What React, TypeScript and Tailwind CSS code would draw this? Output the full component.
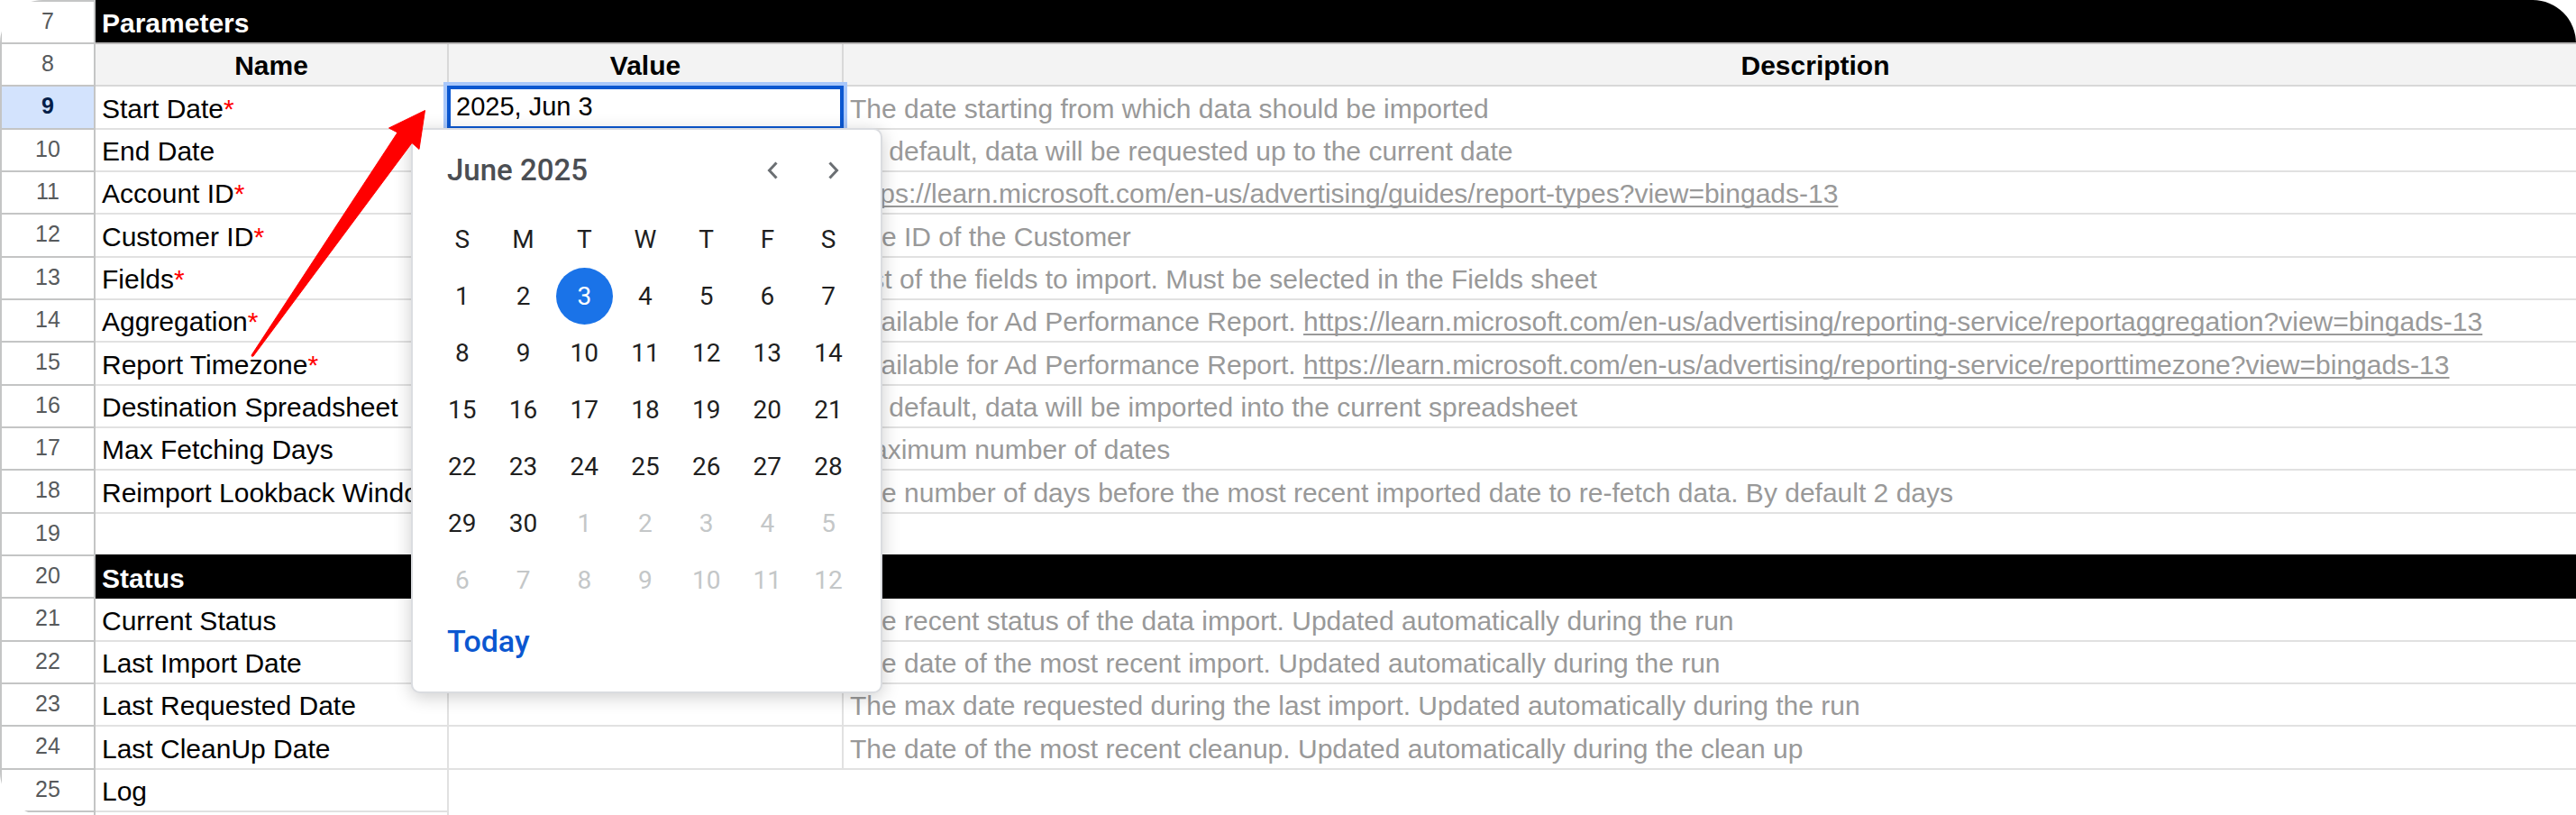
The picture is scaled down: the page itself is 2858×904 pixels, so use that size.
import React, { useState } from "react";

type Row = {
  n: number;
  kind?: "section" | "head";
  name?: string;
  required?: boolean;
  text?: string;
  link?: string;
};

const REF = "https://learn.microsoft.com/en-us/advertising/";

const ROWS: Row[] = [
  { n: 7, kind: "section", name: "Parameters" },
  { n: 8, kind: "head" },
  { n: 9, name: "Start Date", required: true, text: "The date starting from which data should be imported" },
  { n: 10, name: "End Date", text: "By default, data will be requested up to the current date" },
  { n: 11, name: "Account ID", required: true, link: REF + "guides/report-types?view=bingads-13" },
  { n: 12, name: "Customer ID", required: true, text: "The ID of the Customer" },
  { n: 13, name: "Fields", required: true, text: "List of the fields to import. Must be selected in the Fields sheet" },
  {
    n: 14,
    name: "Aggregation",
    required: true,
    text: "Available for Ad Performance Report. ",
    link: REF + "reporting-service/reportaggregation?view=bingads-13",
  },
  {
    n: 15,
    name: "Report Timezone",
    required: true,
    text: "Available for Ad Performance Report. ",
    link: REF + "reporting-service/reporttimezone?view=bingads-13",
  },
  { n: 16, name: "Destination Spreadsheet", text: "By default, data will be imported into the current spreadsheet" },
  { n: 17, name: "Max Fetching Days", text: "Maximum number of dates" },
  {
    n: 18,
    name: "Reimport Lookback Window",
    text: "The number of days before the most recent imported date to re-fetch data. By default 2 days",
  },
  { n: 19 },
  { n: 20, kind: "section", name: "Status" },
  { n: 21, name: "Current Status", text: "The recent status of the data import. Updated automatically during the run" },
  { n: 22, name: "Last Import Date", text: "The date of the most recent import. Updated automatically during the run" },
  {
    n: 23,
    name: "Last Requested Date",
    text: "The max date requested during the last import. Updated automatically during the run",
  },
  { n: 24, name: "Last CleanUp Date", text: "The date of the most recent cleanup. Updated automatically during the clean up" },
];

const WEEKDAYS = ["S", "M", "T", "W", "T", "F", "S"];
const WEEKS = [0, 1, 2, 3, 4, 5].map((w) => [1, 2, 3, 4, 5, 6, 7].map((d) => w * 7 + d));

const CELL = "border-r-2 border-b-2 border-[#e1e1e1] p-0 whitespace-nowrap";

function RowNumber({ n, active, first }: { n: number; active?: boolean; first?: boolean }) {
  return (
    <th
      scope="row"
      className={
        "border-x-2 border-b-2 border-[#c4c5c5] p-0 pb-1 text-center text-[25px] leading-[30px] " +
        (first ? "border-t-2 " : "") +
        (active ? "bg-[#d3e3fd] font-bold text-[#041e49]" : "bg-white font-normal text-[#575a5c]")
      }
    >
      {n}
    </th>
  );
}

function Calendar({ day, onPick }: { day: number; onPick: (d: number) => void }) {
  return (
    <div
      role="dialog"
      aria-label="Choose a date"
      className="absolute top-[46px] -left-[42px] z-20 w-[523px] rounded-[10px] border-2 border-[#dadce0] bg-white pr-6 pb-5 pl-[21px] font-[Roboto,sans-serif] shadow-[0_4px_20px_rgba(0,0,0,0.2)]"
    >
      <div className="flex h-[90px] items-center pl-[17px]">
        <span className="flex-1 text-[33px] leading-10 font-medium text-[#4b4e53]">June 2025</span>
        <div className="flex gap-3">
          <button type="button" aria-label="Previous month" className="flex h-14 w-14 items-center justify-center">
            <svg width="12" height="20" viewBox="0 0 12 20" fill="none" stroke="#6b6f73" strokeWidth="3">
              <path d="M10.5 1.5 2.5 10l8 8.500" />
            </svg>
          </button>
          <button type="button" aria-label="Next month" className="flex h-14 w-14 items-center justify-center">
            <svg width="12" height="20" viewBox="0 0 12 20" fill="none" stroke="#6b6f73" strokeWidth="3">
              <path d="M1.500 1.500 9.500 10l-8 8.500" />
            </svg>
          </button>
        </div>
      </div>
      <table className="w-full table-fixed border-separate border-spacing-0 text-[28px] leading-8 text-[#1f1f1f]">
        <thead>
          <tr className="h-[63px]">
            {WEEKDAYS.map((d, i) => (
              <th key={i} scope="col" className="p-0 text-center font-normal">
                {d}
              </th>
            ))}
          </tr>
        </thead>
        <tbody>
          {WEEKS.map((week) => (
            <tr key={week[0]} className="h-[63px]">
              {week.map((d) => (
                <td key={d} className="p-0 text-center">
                  <button
                    type="button"
                    onClick={() => d <= 30 && onPick(d)}
                    className={
                      "mx-auto flex h-[63px] w-[63px] items-center justify-center rounded-full " +
                      (d === day ? "bg-[#1a73e8] text-white" : d > 30 ? "text-[#c4c7c8]" : "")
                    }
                  >
                    {d > 30 ? d - 30 : d}
                  </button>
                </td>
              ))}
            </tr>
          ))}
        </tbody>
      </table>
      <div className="flex h-[72px] items-center pl-[17px]">
        <button type="button" className="text-[34px] leading-10 font-medium text-[#0b57d0]">
          Today
        </button>
      </div>
    </div>
  );
}

function DateCell() {
  const [day, setDay] = useState(3);
  return (
    <td className={CELL + " relative"}>
      <input
        type="text"
        aria-label="Start Date"
        value={"2025, Jun " + day}
        readOnly
        className="absolute -top-px -left-0.5 z-10 h-[49px] w-[440px] border-4 border-[#0b57d0] bg-white pb-0.5 pl-1.5 text-[29px] leading-9 text-black shadow-[0_0_0_4px_#a8c7fa] outline-none"
      />
      <Calendar day={day} onPick={setDay} />
    </td>
  );
}

function SheetRow({ row }: { row: Row }) {
  if (row.kind === "section") {
    return (
      <tr className="h-[47px] first:h-[49px] nth-[3n]:h-12">
        <RowNumber n={row.n} first={row.n === 7} />
        <th scope="rowgroup" colSpan={3} className="relative bg-black p-0 pt-[3px] pl-[7px] text-left font-bold text-white">
          {row.name}
          {row.n === 7 ? (
            <span className="absolute inset-x-0 bottom-0 h-0.5 bg-[#b9b7b7]" />
          ) : (
            <span className="absolute inset-x-0 -top-0.5 h-0.5 bg-black" />
          )}
        </th>
      </tr>
    );
  }
  if (row.kind === "head") {
    const head = "border-r-2 border-b-2 border-[#d8d8d8] bg-[#f3f3f3] p-0 pt-[3px] text-center font-bold text-black";
    return (
      <tr className="h-[47px] nth-[3n]:h-12">
        <RowNumber n={row.n} />
        <th scope="col" className={head}>Name</th>
        <th scope="col" className={head}>Value</th>
        <th scope="col" className={head}>Description</th>
      </tr>
    );
  }
  return (
    <tr className="h-[47px] nth-[3n]:h-12">
      <RowNumber n={row.n} active={row.n === 9} />
      <td className={CELL + " overflow-hidden pt-[3px] pl-[7px] text-black"}>
        {row.name}
        {row.required && <span className="text-[#ff0000]">*</span>}
      </td>
      {row.n === 9 ? <DateCell /> : <td className={CELL} />}
      <td className={CELL + " pt-[3px] pl-[7px] text-[#999999]"}>
        {row.text}
        {row.link && (
          <a
            href={row.link}
            className="underline decoration-2 underline-offset-3 [text-decoration-skip-ink:none]"
          >
            {row.link}
          </a>
        )}
      </td>
    </tr>
  );
}

export default function App() {
  return (
    <div className="relative h-screen overflow-hidden rounded-[48px] bg-white font-['Liberation_Sans',Arial,sans-serif]">
      <table className="w-[calc(100%+236px)] table-fixed border-separate border-spacing-0 text-[30px] leading-9">
        <colgroup>
          <col className="w-[106px]" />
          <col className="w-[392px]" />
          <col className="w-[438px]" />
          <col />
        </colgroup>
        <tbody>
          {ROWS.map((row) => (
            <SheetRow key={row.n} row={row} />
          ))}
          <tr className="h-[47px]">
            <RowNumber n={25} />
            <td className={CELL + " pt-[3px] pl-[7px] text-black"}>Log</td>
            <td colSpan={2} rowSpan={2} className="p-0" />
          </tr>
          <tr className="h-12">
            <th className="border-x-2 border-[#c4c5c5] p-0" />
            <td className="border-r-2 border-[#e1e1e1] p-0" />
          </tr>
        </tbody>
      </table>
      <svg
        className="pointer-events-none absolute top-[120px] left-[270px] z-30"
        width="210"
        height="280"
        viewBox="270 120 210 280"
        aria-hidden="true"
      >
        <path
          d="M471.500 122.500 431.500 142 441 147 279 394Q279 396 281 395L457 158.500 465 165.500Z"
          fill="#ff0000"
          stroke="#ff0000"
          strokeWidth="1"
          strokeLinejoin="round"
        />
      </svg>
    </div>
  );
}
